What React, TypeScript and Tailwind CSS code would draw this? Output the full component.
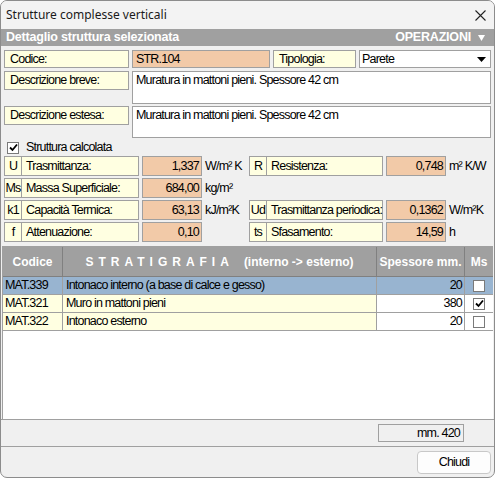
import React from 'react';

const ui = "font-['Liberation_Sans',Arial,sans-serif] text-[12.5px] tracking-[-0.8px]";

const Check = ({ on }: { on: boolean }) => (
  <div className="w-[12px] h-[12px] border border-[#7a7a7a] bg-white flex items-center justify-center">
    {on && (
      <svg width="9" height="9" viewBox="0 0 9 9">
        <path d="M1 4.5 L3.5 7 L8 1.5" stroke="#000" strokeWidth="1.8" fill="none" />
      </svg>
    )}
  </div>
);

const Label = ({ text, w }: { text: string; w: string }) => (
  <div className={`${w} h-full border border-[#a0a0a0] bg-[#ffffe1] px-[5px] flex items-center whitespace-nowrap`}>{text}</div>
);

const Prop = ({ sym, label, value, unit, lw, uw }: { sym: string; label: string; value: string; unit: string; lw: string; uw: string }) => (
  <div className="flex h-full items-stretch whitespace-nowrap">
    <div className="w-[18px] border border-[#a0a0a0] bg-[#ffffe1] flex items-center justify-center">{sym}</div>
    <div className={`${lw} border border-l-0 border-[#a0a0a0] bg-[#ffffe1] px-[4px] flex items-center`}>{label}</div>
    <div className="w-[60px] ml-[3px] border border-[#a0a0a0] bg-[#f2caa8] flex items-center justify-end pr-[2px]">{value}</div>
    <div className={`${uw} pl-[3px] flex items-center`}>{unit}</div>
  </div>
);

const rows = [
  { cod: 'MAT.339', desc: 'Intonaco interno (a base di calce e gesso)', sp: '20', ms: false, sel: true },
  { cod: 'MAT.321', desc: 'Muro in mattoni pieni', sp: '380', ms: true, sel: false },
  { cod: 'MAT.322', desc: 'Intonaco esterno', sp: '20', ms: false, sel: false },
];

export default function App() {
  return (
    <div className={`w-[495px] h-[478px] bg-[#f0f0f0] border border-[#8c8c8c] rounded-[7px] overflow-hidden flex flex-col text-black ${ui}`}>
      {/* Title */}
      <div className="h-[28px] flex items-center justify-between pl-[5px] pr-[8px] bg-[#f3f3f3]">
        <span className="font-['Noto_Sans',sans-serif] text-[12px] tracking-normal text-[#1a1a1a]">Strutture complesse verticali</span>
        <svg width="11" height="11" viewBox="0 0 11 11">
          <path d="M0.5 0.5 L10.5 10.5 M10.5 0.5 L0.5 10.5" stroke="#222" strokeWidth="1.1" />
        </svg>
      </div>

      {/* Section header */}
      <div className="h-[17px] bg-[#a0a0a0] flex items-center justify-between px-[5px] text-white font-bold">
        <span className="text-[12.5px] tracking-[-0.2px]">Dettaglio struttura selezionata</span>
        <span className="flex items-center gap-[7px] text-[12.5px] tracking-[-0.2px] pr-[4px]">
          OPERAZIONI
          <svg width="7" height="6" viewBox="0 0 7 6"><path d="M0 0 H7 L3.5 6 Z" fill="#fff" /></svg>
        </span>
      </div>

      {/* Form */}
      <div className="px-[3px] pt-[4px] flex flex-col">
        <div className="flex h-[18px] gap-[3px]">
          <Label text="Codice:" w="w-[125px]" />
          <div className="w-[138px] h-full border border-[#a0a0a0] bg-[#f2caa8] px-[3px] flex items-center">STR.104</div>
          <Label text="Tipologia:" w="w-[83px]" />
          <div className="flex-1 h-full border border-[#a0a0a0] bg-white pl-[2px] pr-[4px] flex items-center justify-between">
            <span>Parete</span>
            <svg width="9" height="5" viewBox="0 0 9 5"><path d="M0 0 H9 L4.5 5 Z" fill="#000" /></svg>
          </div>
        </div>

        <div className="flex gap-[3px] mt-[3px] h-[33px]">
          <div className="h-[19px]"><Label text="Descrizione breve:" w="w-[125px]" /></div>
          <div className="flex-1 border border-[#a0a0a0] bg-white px-[3px] leading-[17px]">Muratura in mattoni pieni. Spessore 42 cm</div>
        </div>

        <div className="flex gap-[3px] mt-[2px] h-[32px]">
          <div className="h-[19px]"><Label text="Descrizione estesa:" w="w-[125px]" /></div>
          <div className="flex-1 border border-[#a0a0a0] bg-white px-[3px] leading-[17px]">Muratura in mattoni pieni. Spessore 42 cm</div>
        </div>

        <div className="flex items-center gap-[7px] h-[17px] mt-[1px] pl-[3px]">
          <Check on />
          <span>Struttura calcolata</span>
        </div>

        <div className="flex flex-col gap-[2px]">
          <div className="flex h-[20px] gap-[1px]">
            <Prop sym="U" label="Trasmittanza:" value="1,337" unit="W/m² K" lw="w-[117px]" uw="w-[46px]" />
            <Prop sym="R" label="Resistenza:" value="0,748" unit="m² K/W" lw="w-[116px]" uw="w-[44px]" />
          </div>
          <div className="flex h-[20px]">
            <Prop sym="Ms" label="Massa Superficiale:" value="684,00" unit="kg/m²" lw="w-[117px]" uw="w-[46px]" />
          </div>
          <div className="flex h-[20px] gap-[1px]">
            <Prop sym="k1" label="Capacità Termica:" value="63,13" unit="kJ/m²K" lw="w-[117px]" uw="w-[46px]" />
            <Prop sym="Ud" label="Trasmittanza periodica:" value="0,1362" unit="W/m²K" lw="w-[116px]" uw="w-[44px]" />
          </div>
          <div className="flex h-[20px] gap-[1px]">
            <Prop sym="f" label="Attenuazione:" value="0,10" unit="" lw="w-[117px]" uw="w-[46px]" />
            <Prop sym="ts" label="Sfasamento:" value="14,59" unit=" h" lw="w-[116px]" uw="w-[44px]" />
          </div>
        </div>
      </div>

      {/* Table */}
      <div className="mt-[4px] mx-[1px] flex-1 flex flex-col border-t border-l border-[#a0a0a0] bg-white">
        <div className="h-[30px] flex bg-[#a0a0a0] text-white font-bold tracking-[0px] text-[12px] border-b border-[#808080]">
          <div className="w-[60px] flex items-center justify-center border-r border-[#808080]">Codice</div>
          <div className="w-[314px] flex items-center justify-center border-r border-[#808080] gap-[10px]">
            <span className="tracking-[5px]">STRATIGRAFIA</span>
            <span>(interno -&gt; esterno)</span>
          </div>
          <div className="w-[88px] flex items-center justify-center border-r border-[#808080]">Spessore mm.</div>
          <div className="flex-1 flex items-center justify-center">Ms</div>
        </div>
        {rows.map((r) => (
          <div key={r.cod} className="h-[18px] flex border-b border-[#a0a0a0]">
            <div className={`w-[60px] px-[2px] flex items-center border-r border-[#a0a0a0] ${r.sel ? 'bg-[#98b4d0]' : 'bg-[#ffffe1]'}`}>{r.cod}</div>
            <div className={`w-[314px] px-[3px] flex items-center border-r border-[#a0a0a0] ${r.sel ? 'bg-[#98b4d0]' : 'bg-[#ffffe1]'}`}>{r.desc}</div>
            <div className={`w-[88px] px-[2px] flex items-center justify-end border-r border-[#a0a0a0] ${r.sel ? 'bg-[#98b4d0]' : 'bg-white'}`}>{r.sp}</div>
            <div className={`flex-1 flex items-center justify-center ${r.sel ? 'bg-[#98b4d0]' : 'bg-white'}`}><Check on={r.ms} /></div>
          </div>
        ))}
      </div>

      {/* Totals */}
      <div className="h-[27px] border-t border-[#a0a0a0] flex items-center justify-end pr-[30px]">
        <div className="w-[86px] h-[18px] border border-[#a0a0a0] flex items-center justify-end pr-[3px]">mm. 420</div>
      </div>

      {/* Footer */}
      <div className="h-[31px] border-t border-[#a0a0a0] flex items-center justify-end pr-[3px]">
        <button className="w-[74px] h-[23px] rounded-[4px] border border-[#c8c8c8] bg-[#fdfdfd] flex items-center justify-center">Chiudi</button>
      </div>
    </div>
  );
}
